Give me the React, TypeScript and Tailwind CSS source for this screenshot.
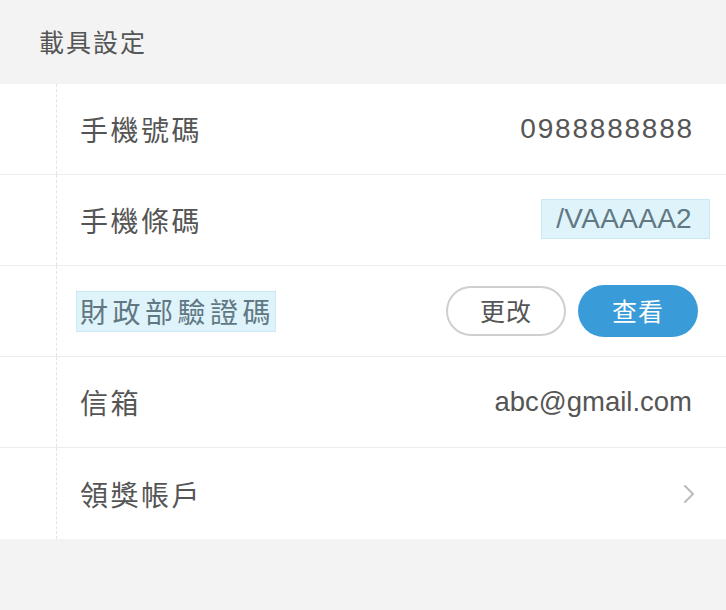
import React from 'react';

const cjk = "font-['Noto_Sans_CJK_TC','Noto_Sans',sans-serif]";
const latin = "font-['Liberation_Sans','Noto_Sans_CJK_TC',sans-serif]";

const Row: React.FC<{ last?: boolean; children: React.ReactNode }> = ({ last, children }) => (
  <div className={`flex h-[91px] bg-white ${last ? '' : 'border-b border-[#ececec]'}`}>
    <div className="w-[56px] shrink-0" />
    <div className="flex-1 flex items-center justify-between border-l border-dashed border-[#e3e3e3] pl-[23px] pr-[34px]">
      {children}
    </div>
  </div>
);

const Label: React.FC<{ children: React.ReactNode }> = ({ children }) => (
  <span className={`${cjk} text-[28px] tracking-[2.5px] text-[#555]`}>{children}</span>
);

export default function App() {
  return (
    <div className="w-full h-[610px] bg-[#f3f3f3]">
      {/* Section header */}
      <div className={`h-[84px] flex items-center pl-[39px] ${cjk} text-[25px] tracking-[2px] text-[#555]`}>
        載具設定
      </div>

      <div className="bg-white">
        <Row>
          <Label>手機號碼</Label>
          <span className={`${latin} text-[28px] tracking-[1.8px] -mr-[2px] text-[#555]`}>0988888888</span>
        </Row>

        <Row>
          <Label>手機條碼</Label>
          <span className={`${latin} text-[28px] tracking-[0.3px] text-[#5f7883] bg-[#dff3fb] border border-[#cbe9f5] h-[40px] flex items-center pl-[14px] pr-[17px] -mr-[18px] -mt-[2px]`}>
            /VAAAAA2
          </span>
        </Row>

        <div className="flex h-[91px] bg-white border-b border-[#ececec]">
          <div className="w-[56px] shrink-0" />
          <div className="flex-1 flex items-center justify-between border-l border-dashed border-[#e3e3e3] pl-[19px] pr-[28px]">
            <span className={`${cjk} text-[28px] tracking-[4.5px] text-[#5f7883] bg-[#dff3fb] border border-[#cbe9f5] h-[41px] flex items-center pl-[3px] pr-[0px]`}>
              財政部驗證碼
            </span>
            <div className="flex items-center gap-[12px]">
              <button className={`${cjk} w-[120px] h-[50px] rounded-full border-2 border-[#cfcfcf] bg-white text-[25px] tracking-[1px] text-[#555]`}>
                更改
              </button>
              <button className={`${cjk} w-[120px] h-[52px] rounded-full bg-[#3a9bd9] text-[25px] tracking-[1px] text-white`}>
                查看
              </button>
            </div>
          </div>
        </div>

        <Row>
          <Label>信箱</Label>
          <span className={`${latin} text-[27.5px] text-[#555]`}>abc@gmail.com</span>
        </Row>

        <Row last>
          <Label>領獎帳戶</Label>
          <svg width="14" height="22" viewBox="0 0 14 22" fill="none" className="-mr-[4px]">
            <path d="M3 3 L11 11 L3 19" stroke="#bcbcbc" strokeWidth="2" strokeLinecap="round" strokeLinejoin="round" />
          </svg>
        </Row>
      </div>
    </div>
  );
}
